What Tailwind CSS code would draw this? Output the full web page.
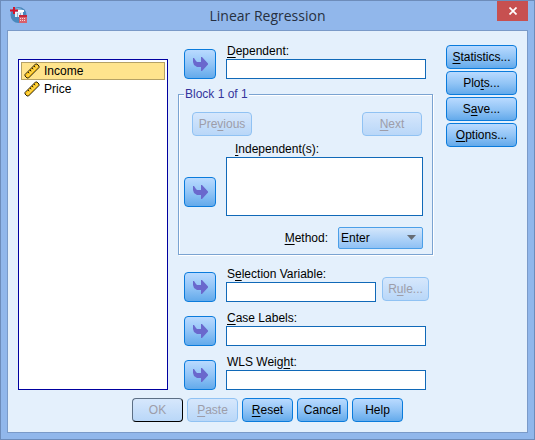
<!DOCTYPE html>
<html lang="en">
<head>
<meta charset="utf-8">
<meta name="viewport" content="width=device-width, initial-scale=1">
<title>Linear Regression</title>
<script src="https://cdn.jsdelivr.net/npm/@tailwindcss/browser@4"></script>
</head>
<body class="flex min-h-screen flex-col border border-[#6d8cba] bg-[#91b7eb] px-[6px] pb-[6px] font-['Liberation_Sans',Arial,sans-serif] text-[12px] leading-4 text-black">
<svg class="hidden" aria-hidden="true">
  <symbol id="arrow" viewBox="0 0 15 14"><path fill="#6a68cd" d="M0 1h1l2 3 1 1h4V0h1l6 6.500v1L9 14H8v-4H4L1 8 0 5z"/></symbol>
  <symbol id="ruler" viewBox="0 0 16 16">
    <path d="M1 11.500 11.500 1H13l2 2v1.500L4.500 15H3l-2-2z" fill="#ffc61a" stroke="#2b2410"/>
    <path d="M4 9 5.500 10.500M6 7 7.500 8.500M8 5 9.500 6.500M10 3 11.500 4.500" stroke="#2b2410"/>
    <path d="M3 13.500 13.500 3" stroke="#ffe680"/>
  </symbol>
</svg>

<header class="relative flex h-[29px] shrink-0 items-center justify-center">
  <svg class="absolute top-[5px] left-[3px] h-[18px] w-[18px]" viewBox="0 0 18 18" aria-hidden="true">
    <circle cx="8.500" cy="9" r="8" fill="#4a88bd"/>
    <path d="M3 4q5-4 10 0v3H3z" fill="#86b4da"/>
    <path d="M5 6h8v5H5z" fill="#e8f2f9"/>
    <path d="M8 4h6v2H8z" fill="#fff"/>
    <path d="M7.500 7v4M10.500 7v4" stroke="#8db6d8"/>
    <path d="M0 4.500h8M4 1v7" stroke="#d4142c" stroke-width="2"/>
    <path d="M9 9h8v8H9z" fill="#d8606c"/>
    <path d="M9 9h8v2H9z" fill="#c4283a"/>
    <path d="M10 12.500h6M10 14.500h6" stroke="#f6d3d6" stroke-dasharray="1 1"/>
  </svg>
  <h1 class="font-['Open_Sans','Noto_Sans',sans-serif] text-[14px] leading-5 text-[#263040]">Linear Regression</h1>
  <button type="button" aria-label="Close" class="absolute top-0 right-0 flex h-5 w-[31px] items-center justify-center bg-[#c75050]">
    <svg class="h-[8px] w-[8px]" viewBox="0 0 8 8" aria-hidden="true"><path d="M.5.5l7 7M7.500.5l-7 7" stroke="#fff" stroke-width="1.700"/></svg>
  </button>
</header>

<main class="flex flex-1 flex-col border border-[#7a9ac8] bg-[#e4f0fc] px-[10px] pt-3 pb-[10px]">
  <div class="grid flex-1 grid-cols-[150fr_255fr_74px] gap-x-[10px]">
    <ul role="listbox" aria-label="Variables" class="mt-4 border border-[#0000a0] bg-white p-[2px]">
      <li role="option" aria-selected="true" class="flex h-[18px] items-center gap-1 border border-[#b5a165] bg-[#ffe48d] px-[2px]"><svg class="h-4 w-4" aria-hidden="true"><use href="#ruler"/></svg>Income</li>
      <li role="option" aria-selected="false" class="flex h-[18px] items-center gap-1 border border-transparent px-[2px]"><svg class="h-4 w-4" aria-hidden="true"><use href="#ruler"/></svg>Price</li>
    </ul>

    <form id="regression" class="flex flex-col">
      <div class="flex items-end gap-[10px] pr-[7px] pl-[6px]">
        <button type="button" aria-label="Move to Dependent" class="flex h-[30px] w-8 shrink-0 items-center justify-center rounded-[4px] border border-[#0a7bdc] bg-linear-to-b from-[#b9daff] via-[#93c5f6] to-[#63aaeb]"><svg class="h-[14px] w-[15px]" aria-hidden="true"><use href="#arrow"/></svg></button>
        <div class="flex flex-1 flex-col">
          <label for="dependent" class="pl-px"><u class="underline-offset-2">D</u>ependent:</label>
          <input id="dependent" type="text" class="h-5 w-full border border-[#1069b8] bg-white px-1">
        </div>
      </div>

      <fieldset class="mt-[7px] flex flex-col border border-[#7aa3d1] pt-[10px] pr-[9px] pb-[5px] pl-[5px] shadow-[1px_1px_0_#fff,inset_1px_1px_0_#fff]">
        <legend class="bg-[#e4f0fc] px-px leading-4 text-[#34349c]">Block 1 of 1</legend>
        <div class="flex justify-between pr-px pl-2">
          <button type="button" disabled class="h-6 w-[60px] rounded-[4px] border border-[#90c2f3] bg-linear-to-b from-[#d6e7fc] to-[#b9d7f8] text-[#9d9da9]">Pre<u class="underline-offset-2">v</u>ious</button>
          <button type="button" disabled class="h-6 w-[60px] rounded-[4px] border border-[#90c2f3] bg-linear-to-b from-[#d6e7fc] to-[#b9d7f8] text-[#9d9da9]"><u class="underline-offset-2">N</u>ext</button>
        </div>
        <label for="independents" class="mt-[5px] pl-[51px]"><u class="underline-offset-2">I</u>ndependent(s):</label>
        <div class="flex gap-[10px]">
          <button type="button" aria-label="Move to Independents" class="mt-5 flex h-[30px] w-8 shrink-0 items-center justify-center rounded-[4px] border border-[#0a7bdc] bg-linear-to-b from-[#b9daff] via-[#93c5f6] to-[#63aaeb]"><svg class="h-[14px] w-[15px]" aria-hidden="true"><use href="#arrow"/></svg></button>
          <textarea id="independents" class="h-[59px] min-w-0 flex-1 resize-none border border-[#1069b8] bg-white px-1"></textarea>
        </div>
        <div class="mt-[11px] flex items-center justify-end gap-[10px]">
          <label for="method"><u class="underline-offset-2">M</u>ethod:</label>
          <div class="relative">
            <select id="method" class="block h-[22px] w-[85px] appearance-none rounded-[2px] border border-[#4b9fe8] bg-linear-to-b from-[#d3e6fb] to-[#8fc1f4] pl-[2px]"><option>Enter</option><option>Stepwise</option><option>Remove</option><option>Backward</option><option>Forward</option></select>
            <svg class="pointer-events-none absolute top-2 right-[7px] h-[5px] w-[9px]" viewBox="0 0 9 5" aria-hidden="true"><path d="M0 0h9L4.500 5z" fill="#666c74"/></svg>
          </div>
        </div>
      </fieldset>

      <div class="mt-[11px] flex items-end gap-[10px] pr-1 pl-[6px]">
        <button type="button" aria-label="Move to Selection Variable" class="flex h-[30px] w-8 shrink-0 items-center justify-center rounded-[4px] border border-[#0a7bdc] bg-linear-to-b from-[#b9daff] via-[#93c5f6] to-[#63aaeb]"><svg class="h-[14px] w-[15px]" aria-hidden="true"><use href="#arrow"/></svg></button>
        <div class="flex min-w-0 flex-1 items-end gap-[6px]">
          <div class="flex min-w-0 flex-1 flex-col">
            <label for="selection" class="pl-px">S<u class="underline-offset-2">e</u>lection Variable:</label>
            <input id="selection" type="text" class="h-5 w-full border border-[#1069b8] bg-white px-1">
          </div>
          <button type="button" disabled class="mb-px h-6 w-[47px] rounded-[4px] border border-[#90c2f3] bg-linear-to-b from-[#d6e7fc] to-[#b9d7f8] text-[#9d9da9]">R<u class="underline-offset-2">u</u>le...</button>
        </div>
      </div>

      <div class="mt-2 flex items-end gap-[10px] pr-[7px] pl-[6px]">
        <button type="button" aria-label="Move to Case Labels" class="flex h-[30px] w-8 shrink-0 items-center justify-center rounded-[4px] border border-[#0a7bdc] bg-linear-to-b from-[#b9daff] via-[#93c5f6] to-[#63aaeb]"><svg class="h-[14px] w-[15px]" aria-hidden="true"><use href="#arrow"/></svg></button>
        <div class="flex flex-1 flex-col">
          <label for="caselabels" class="pl-px"><u class="underline-offset-2">C</u>ase Labels:</label>
          <input id="caselabels" type="text" class="h-5 w-full border border-[#1069b8] bg-white px-1">
        </div>
      </div>

      <div class="mt-2 flex items-end gap-[10px] pr-[7px] pl-[6px]">
        <button type="button" aria-label="Move to WLS Weight" class="flex h-[30px] w-8 shrink-0 items-center justify-center rounded-[4px] border border-[#0a7bdc] bg-linear-to-b from-[#b9daff] via-[#93c5f6] to-[#63aaeb]"><svg class="h-[14px] w-[15px]" aria-hidden="true"><use href="#arrow"/></svg></button>
        <div class="flex flex-1 flex-col">
          <label for="weight" class="pl-px">WLS Weig<u class="underline-offset-2">h</u>t:</label>
          <input id="weight" type="text" class="h-5 w-full border border-[#1069b8] bg-white px-1">
        </div>
      </div>
    </form>

    <div class="mt-[2px] ml-[3px] flex flex-col gap-[2px]">
      <button type="button" class="h-6 rounded-[4px] border border-[#0a7bdc] bg-linear-to-b from-[#b9daff] via-[#93c5f6] to-[#63aaeb]"><u class="underline-offset-2">S</u>tatistics...</button>
      <button type="button" class="h-6 rounded-[4px] border border-[#0a7bdc] bg-linear-to-b from-[#b9daff] via-[#93c5f6] to-[#63aaeb]">Plo<u class="underline-offset-2">t</u>s...</button>
      <button type="button" class="h-6 rounded-[4px] border border-[#0a7bdc] bg-linear-to-b from-[#b9daff] via-[#93c5f6] to-[#63aaeb]">S<u class="underline-offset-2">a</u>ve...</button>
      <button type="button" class="h-6 rounded-[4px] border border-[#0a7bdc] bg-linear-to-b from-[#b9daff] via-[#93c5f6] to-[#63aaeb]"><u class="underline-offset-2">O</u>ptions...</button>
    </div>
  </div>

  <footer class="mt-2 flex justify-center gap-1">
    <button type="button" disabled class="h-6 w-[51px] rounded-[4px] border border-t-[#5c6f85] border-l-[#5c6f85] border-r-black border-b-black bg-linear-to-b from-[#d6e7fc] to-[#b9d7f8] text-[#9d9da9]">OK</button>
    <button type="button" disabled class="h-6 w-[51px] rounded-[4px] border border-[#90c2f3] bg-linear-to-b from-[#d6e7fc] to-[#b9d7f8] text-[#9d9da9]"><u class="underline-offset-2">P</u>aste</button>
    <button type="reset" form="regression" class="h-6 w-[51px] rounded-[4px] border border-[#0a7bdc] bg-linear-to-b from-[#b9daff] via-[#93c5f6] to-[#63aaeb]"><u class="underline-offset-2">R</u>eset</button>
    <button type="button" class="h-6 w-[51px] rounded-[4px] border border-[#0a7bdc] bg-linear-to-b from-[#b9daff] via-[#93c5f6] to-[#63aaeb]">Cancel</button>
    <button type="button" class="h-6 w-[51px] rounded-[4px] border border-[#0a7bdc] bg-linear-to-b from-[#b9daff] via-[#93c5f6] to-[#63aaeb]">Help</button>
  </footer>
</main>
</body>
</html>
